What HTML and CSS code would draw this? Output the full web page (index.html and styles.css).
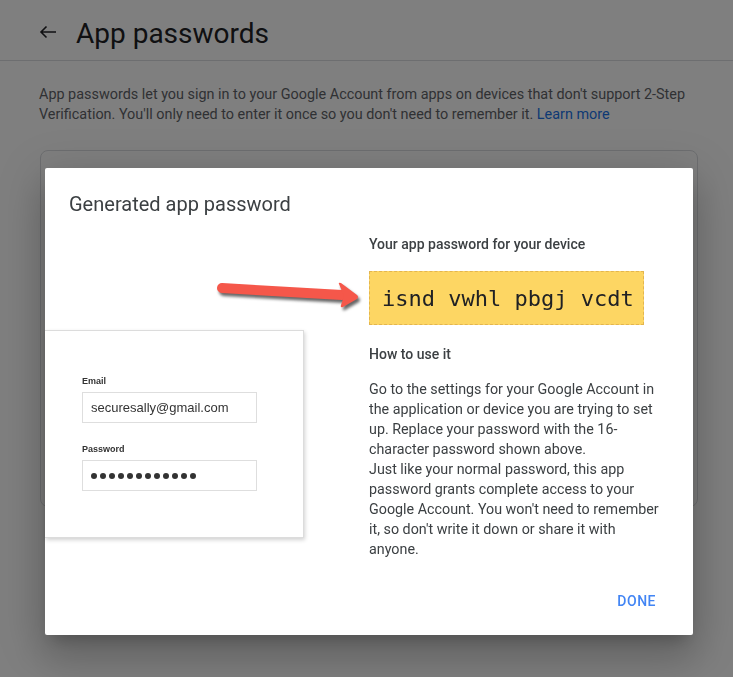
FILE: index.html
```html
<!DOCTYPE html>
<html>
<head>
    <meta charset="UTF-8">
    <title>App passwords</title>
    <link rel="stylesheet" href="styles.css">
</head>
<body>
    <div class="header">
        <svg class="back" width="18" height="14" viewBox="0 0 18 14">
            <path d="M17 7H2M7.5 1.5L2 7l5.5 5.5" fill="none" stroke="#202124" stroke-width="1.6"/>
        </svg>
        <h1>App passwords</h1>
    </div>

    <p class="intro">
        App passwords let you sign in to your Google Account from apps on devices that don't support 2-Step
        Verification. You'll only need to enter it once so you don't need to remember it. <a href="#">Learn more</a>
    </p>

    <div class="card"></div>

    <div class="overlay"></div>

    <div class="dialog">
        <h2 class="dialog-title">Generated app password</h2>

        <div class="dialog-body">
            <div class="left">
                <svg class="pointer" width="150" height="34" viewBox="0 0 150 34">
                    <g class="arrow">
                        <line x1="8" y1="8" x2="128" y2="15" stroke="#f5574a" stroke-width="10" stroke-linecap="round"/>
                        <path d="M125 4 Q124 2 127 3 L143 15 Q145 17 143 19 L129 27 Q126 28 127 25 L130 16 Z" fill="#f5574a"/>
                    </g>
                </svg>

                <div class="shot">
                    <div class="field-label">Email</div>
                    <div class="field">securesally@gmail.com</div>
                    <div class="field-label pw-label">Password</div>
                    <div class="field">
                        <span class="dots">
                            <i></i><i></i><i></i><i></i><i></i><i></i><i></i><i></i><i></i><i></i><i></i><i></i>
                        </span>
                    </div>
                </div>
            </div>

            <div class="right">
                <div class="subhead">Your app password for your device</div>
                <div class="password">isnd vwhl pbgj vcdt</div>
                <div class="subhead howto">How to use it</div>
                <p class="howto-text">
                    Go to the settings for your Google Account in the application or device you are trying to set
                    up. Replace your password with the 16-character password shown above.<br>
                    Just like your normal password, this app password grants complete access to your
                    Google Account. You won't need to remember it, so don't write it down or share it with
                    anyone.
                </p>
            </div>
        </div>

        <div class="actions">
            <button>DONE</button>
        </div>
    </div>
</body>
</html>
```

FILE: styles.css
```css
body {
    margin: 0;
    background-color: #fff;
    font-family: Roboto, "Liberation Sans", Arial, sans-serif;
    color: #202124;
    height: 677px;
    overflow: hidden;
}

.header {
    height: 60px;
    display: flex;
    align-items: center;
    padding-left: 39px;
    gap: 19px;
    border-bottom: 1px solid #dadce0;
}

.header h1 {
    margin: 0;
    font-size: 28px;
    font-weight: 400;
    color: #202124;
    position: relative;
    top: 3px;
}

.back {
    position: relative;
    top: 2px;
}

.intro {
    margin: 24px 10px 0 39px;
    font-size: 14.4px;
    line-height: 20px;
    color: #5f6368;
}

.intro a {
    color: #1a73e8;
    text-decoration: none;
}

.card {
    margin: 25px 35px 0 40px;
    height: 355px;
    border: 1px solid #dadce0;
    border-radius: 8px;
}

.overlay {
    position: fixed;
    inset: 0;
    background-color: rgba(0, 0, 0, 0.5);
}

.dialog {
    position: absolute;
    left: 45px;
    top: 168px;
    width: 648px;
    height: 467px;
    background-color: #fff;
    border-radius: 2px;
    box-shadow: 0 11px 15px -7px rgba(0, 0, 0, 0.2), 0 24px 38px 3px rgba(0, 0, 0, 0.14), 0 9px 46px 8px rgba(0, 0, 0, 0.12);
    display: flex;
    flex-direction: column;
}

.dialog-title {
    margin: 0;
    padding: 24px 24px 0;
    font-size: 20px;
    line-height: 24px;
    font-weight: 400;
    color: #3c4043;
}

.dialog-body {
    display: flex;
    margin-top: 18px;
}

.left {
    width: 324px;
    position: relative;
}

.pointer {
    position: absolute;
    left: 169px;
    top: 46px;
}

.arrow {
    filter: drop-shadow(2px 3px 1.5px rgba(0, 0, 0, 0.6));
}

.shot {
    margin-top: 96px;
    width: 259px;
    height: 208px;
    box-sizing: border-box;
    border: 1px solid #dcdcdc;
    border-left: none;
    box-shadow: 1px 2px 4px rgba(0, 0, 0, 0.18);
    padding: 45px 0 0 37px;
    font-family: "Liberation Sans", Arial, sans-serif;
}

.field-label {
    font-size: 9px;
    font-weight: bold;
    color: #333;
    height: 11px;
    line-height: 11px;
}

.pw-label {
    margin-top: 21px;
}

.field {
    margin-top: 5px;
    width: 175px;
    height: 31px;
    box-sizing: border-box;
    border: 1px solid #dedede;
    padding-left: 8px;
    display: flex;
    align-items: center;
    font-size: 13px;
    color: #333;
}

.dots {
    display: flex;
    gap: 3px;
    padding-top: 1px;
}

.dots i {
    width: 6px;
    height: 6px;
    border-radius: 50%;
    background-color: #333;
}

.right {
    width: 298px;
}

.subhead {
    font-size: 14px;
    line-height: 20px;
    font-weight: 500;
    color: #3c4043;
}

.password {
    margin-top: 17px;
    width: 275px;
    height: 54px;
    box-sizing: border-box;
    background-color: #fdd663;
    border: 1px dashed #e3b54f;
    font-family: "DejaVu Sans Mono", "Liberation Mono", monospace;
    font-size: 22px;
    color: #202124;
    display: flex;
    align-items: center;
    padding-left: 12px;
}

.howto {
    margin-top: 19px;
}

.howto-text {
    margin: 15px 0 0;
    font-size: 14.3px;
    line-height: 20px;
    color: #3c4043;
}

.actions {
    margin-top: auto;
    display: flex;
    justify-content: flex-end;
    padding: 0 29px 18px 0;
}

button {
    background: none;
    border: none;
    padding: 8px;
    font-family: Roboto, "Liberation Sans", Arial, sans-serif;
    font-size: 14px;
    font-weight: 500;
    letter-spacing: 0.5px;
    color: #4285f4;
    cursor: pointer;
}
```
